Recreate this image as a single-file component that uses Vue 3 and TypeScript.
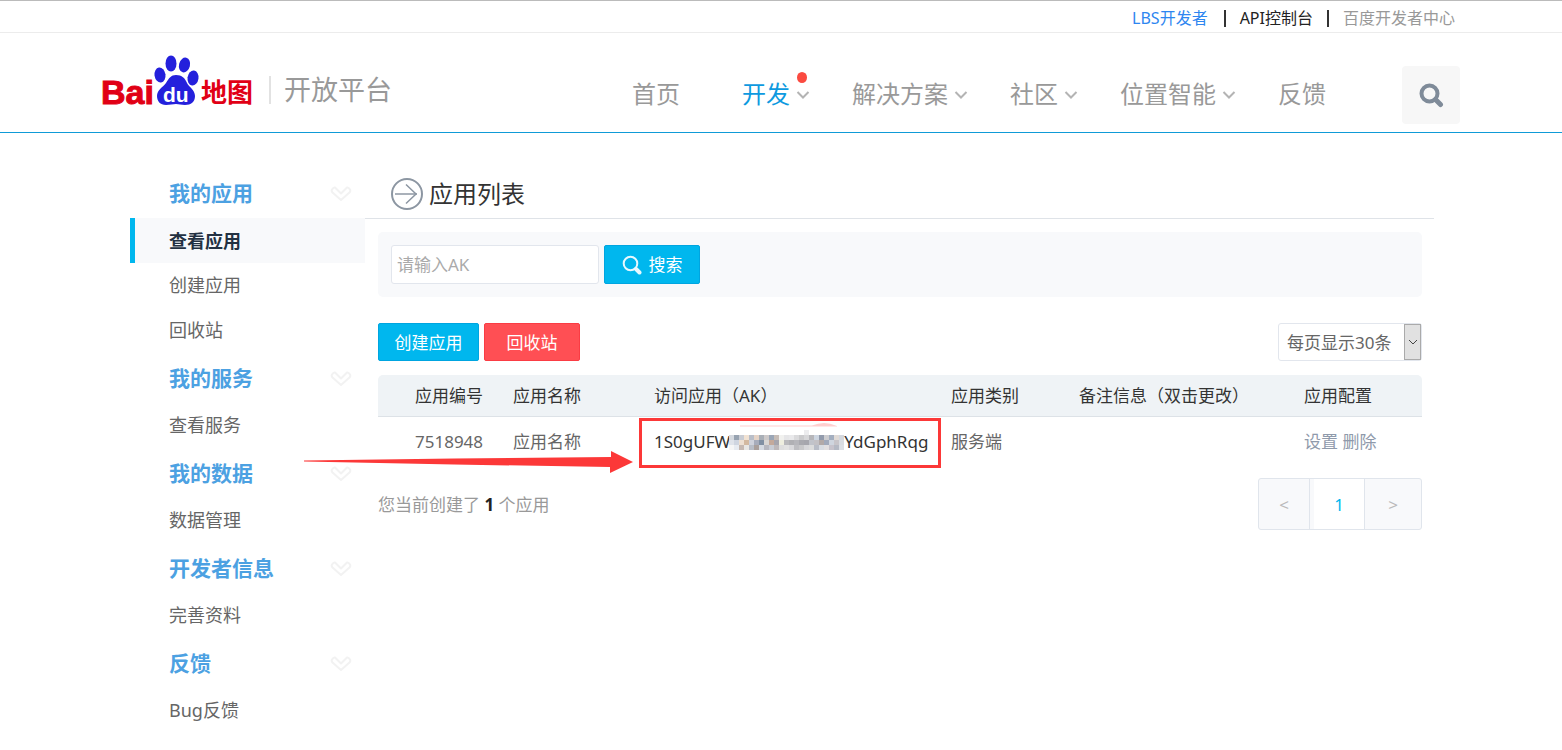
<script setup lang="ts">
import { ref } from 'vue'

interface NavItem { label: string; menu: boolean; active?: boolean; badge?: boolean }
interface Group { title: string; items: string[] }

const nav: NavItem[] = [
  { label: '首页', menu: false },
  { label: '开发', menu: true, active: true, badge: true },
  { label: '解决方案', menu: true },
  { label: '社区', menu: true },
  { label: '位置智能', menu: true },
  { label: '反馈', menu: false },
]

const groups: Group[] = [
  { title: '我的应用', items: ['查看应用', '创建应用', '回收站'] },
  { title: '我的服务', items: ['查看服务'] },
  { title: '我的数据', items: ['数据管理'] },
  { title: '开发者信息', items: ['完善资料'] },
  { title: '反馈', items: ['Bug反馈'] },
]

const current = '查看应用'
const keyword = ref('')
const pageSize = ref('30')

const mosaic: string[][] = [
  ['#d5d9df', '#98a3b1', '#c9ccd3', '#f1e2d3', '#b9bec8', '#e5d3c6', '#a9afb7', '#cdc9c9', '#9ba6b6', '#c6bcb6', '#f1f1ef', '#e6e6e8', '#e9e9eb', '#dadadc', '#cacacc', '#d6d6d8', '#b6b6ba', '#cdd5e0', '#929bac', '#cccccf', '#a3aebf', '#e0dad6', '#d3d7de'],
  ['#dfe3ea', '#cfd5e0', '#eee0d2', '#d3b9a0', '#cfd2dc', '#a7acbb', '#8190a3', '#d9d6d4', '#c3a99b', '#a6a5ad', '#eeeedf', '#b9b9bc', '#b0b0b4', '#b6b6bb', '#a9a9af', '#a6a6ad', '#c1c3ca', '#c3c1c5', '#b2a9a8', '#a1a9bb', '#cfd5df', '#c8c5ca', '#d9dce2'],
  ['#f6f6f6', '#e7ebf1', '#c6b9b2', '#e9e7e4', '#b8bdc7', '#a99f9c', '#d5dae2', '#b7b8c0', '#c8ccd4', '#bdb8ba', '#dedede', '#e2e2e2', '#d9d9dc', '#bebec2', '#c8c8ca', '#d7d7da', '#dcdcdc', '#b9bdc7', '#d8dce3', '#e2dfe1', '#c7c3cc', '#b5b9c4', '#dcdfe5'],
]
</script>

<template>
  <div class="page">
    <div class="topbar">
      <div class="wrap topbar-in">
        <a href="#" class="lbs">LBS开发者</a>
        <span class="bar"></span>
        <a href="#" class="api">API控制台</a>
        <span class="bar"></span>
        <a href="#" class="center">百度开发者中心</a>
      </div>
    </div>

    <header class="header">
      <div class="wrap header-in">
        <a href="#" class="brand">
          <svg class="logo" width="153" height="52" viewBox="0 0 153 52" role="img" aria-label="百度地图">
            <text x="0" y="49" font-size="34" class="lt" fill="#e10015" stroke="#e10015" stroke-width="1">Bai</text>
            <g fill="#2420dc">
              <ellipse cx="59" cy="20" rx="5.5" ry="7.5" transform="rotate(-8 59 20)" />
              <ellipse cx="70" cy="8.5" rx="5.5" ry="8" />
              <ellipse cx="83.5" cy="10" rx="5.5" ry="7.5" transform="rotate(14 83.5 10)" />
              <ellipse cx="92" cy="23" rx="5.5" ry="7.5" transform="rotate(8 92 23)" />
              <path d="M75 20c6 0 9 3 11 8 2 4 8 7 8 13 0 6-4 9-10 9-4 0-6-1-9-1s-6 1-10 1c-6 0-9-4-9-9 0-6 6-9 9-13 3-5 5-8 10-8z" />
            </g>
            <text x="62" y="47" font-size="21" class="lt" fill="#fff">du</text>
            <text x="100" y="47" font-size="26" class="cn" fill="#e10015">地图</text>
          </svg>
          <span class="sep"></span>
          <span class="platform">开放平台</span>
        </a>
        <nav class="nav">
          <a v-for="n in nav" :key="n.label" href="#" class="nav-item" :class="{ on: n.active }">
            <span>{{ n.label }}</span>
            <span class="slot">
              <svg v-if="n.menu" width="14" height="10" viewBox="0 0 14 10"><path d="M1.5 2l5.5 5.5L12.5 2" fill="none" stroke="#b4b4b4" stroke-width="2" /></svg>
              <i v-if="n.badge" class="dot"></i>
            </span>
          </a>
        </nav>
        <button class="find" type="button" aria-label="搜索站点">
          <svg width="26" height="26" viewBox="0 0 26 26" fill="none" stroke="#7f8b99"><circle cx="11.5" cy="11.5" r="8" stroke-width="4" /><path d="M17.5 17.5l5 5" stroke-width="5" stroke-linecap="round" /></svg>
        </button>
      </div>
    </header>

    <div class="body">
      <aside class="side">
        <section v-for="g in groups" :key="g.title">
          <h2 class="group">
            {{ g.title }}
            <svg width="22" height="18" viewBox="0 0 22 18"><path d="M5 3.5Q3.5 3 2 5.5Q1.200 7 2.500 8.500L11 16L19.500 8.500Q20.800 7 20 5.500Q18.500 3 17 3.500L11 9.500Z" fill="#fff" stroke="#f2f2f2" stroke-width="2" stroke-linejoin="round" /></svg>
          </h2>
          <a v-for="i in g.items" :key="i" href="#" class="item" :class="{ cur: i === current }">{{ i }}</a>
        </section>
      </aside>

      <main class="main">
        <h1 class="title">
          <svg width="34" height="34" viewBox="0 0 34 34" fill="none"><circle cx="17" cy="17" r="15" stroke="#8c96a2" stroke-width="2" /><path d="M5 17h22" stroke="#aab1ba" stroke-width="2" /><path d="M16 7.500L26 17L16 26.500" stroke="#8c96a2" stroke-width="1.500" /></svg>
          应用列表
        </h1>

        <div class="content">
          <form class="search" @submit.prevent>
            <input v-model="keyword" type="text" placeholder="请输入AK" aria-label="请输入AK" />
            <button class="btn blue go" type="submit">
              <svg width="20" height="20" viewBox="0 0 20 20" fill="none" stroke="#e8f8fe"><circle cx="8.500" cy="8.500" r="6.800" stroke-width="2" /><path d="M14 14l3.500 3.500" stroke-width="4" stroke-linecap="round" /></svg>
              搜索
            </button>
          </form>

          <div class="tools">
            <button class="btn blue create" type="button">创建应用</button>
            <button class="btn red" type="button">回收站</button>
            <div class="select">
              <select v-model="pageSize" aria-label="每页显示条数">
                <option value="30">每页显示30条</option>
                <option value="50">每页显示50条</option>
              </select>
              <span class="drop"><svg width="10" height="6" viewBox="0 0 10 6"><path d="M1 1l4 4 4-4" fill="none" stroke="#444" /></svg></span>
            </div>
          </div>

          <table class="table">
            <thead>
              <tr>
                <th class="c1">应用编号</th>
                <th class="c2">应用名称</th>
                <th class="c3">访问应用（AK）</th>
                <th class="c4">应用类别</th>
                <th class="c5">备注信息（双击更改）</th>
                <th>应用配置</th>
              </tr>
            </thead>
            <tbody>
              <tr>
                <td class="c1">7518948</td>
                <td>应用名称</td>
                <td class="ak">
                  <div class="key">
                    <span>1S0gUFW</span>
                    <svg width="115" height="20" viewBox="0 0 115 20" shape-rendering="crispEdges">
                      <rect x="75" y="0" width="5" height="5" fill="#ececee" />
                      <template v-for="(row, r) in mosaic" :key="r">
                        <rect v-for="(c, k) in row" :key="k" :x="k * 5" :y="r * 5 + 5" width="5" height="5" :fill="c" />
                      </template>
                    </svg>
                    <span>YdGphRqg</span>
                  </div>
                  <div class="mark">
                    <svg width="98" height="4" viewBox="0 0 98 4"><path d="M0 2.500h72q6-2.500 12-2.500t13 3v.5H0z" fill="#ffcfcf" /></svg>
                  </div>
                  <svg class="arrow" width="330" height="24" viewBox="0 0 330 24"><path d="M0 9.500L150 7.500L307 6V0L329 11L306 22V16L150 13.500L0 10.500Z" fill="#fc3838" /></svg>
                </td>
                <td>服务端</td>
                <td></td>
                <td class="ops"><a href="#">设置</a> <a href="#">删除</a></td>
              </tr>
            </tbody>
          </table>

          <div class="foot">
            <p>您当前创建了 <b>1</b> 个应用</p>
            <div class="pager">
              <button type="button" class="prev" aria-label="上一页">&lt;</button>
              <button type="button" class="num">1</button>
              <button type="button" class="next" aria-label="下一页">&gt;</button>
            </div>
          </div>
        </div>
      </main>
    </div>
  </div>
</template>

<style>
body { background: #fff; }
</style>

<style scoped>
* { box-sizing: border-box; }
.page { font-family: "Noto Sans", "Noto Sans CJK SC", sans-serif; font-size: 17px; color: #666; border-top: 1px solid #bbb; }
a { text-decoration: none; color: inherit; }
button, input, select { font: inherit; margin: 0; }
svg { display: block; flex: none; }
.wrap { max-width: 1360px; margin: 0 auto; display: flex; align-items: center; }
.topbar { border-bottom: 1px solid #ececec; }
.topbar-in { height: 31px; padding-right: 6px; padding-top: 3px; justify-content: flex-end; gap: 14px; font-size: 16px; line-height: 24px; }
.lbs { color: #2e86f0; margin-right: 2px; }
.api { color: #222; }
.center { color: #999; }
.bar { width: 2px; height: 17px; background: #333; }

.header { border-bottom: 1px solid #0f9bd7; }
.header-in { height: 99px; }
.brand { display: flex; align-items: center; padding-top: 15px; }
.logo { overflow: visible; margin-top: -18px; }
.lt { font-family: "Liberation Sans", sans-serif; font-weight: 700; }
.cn { font-family: "Noto Sans CJK SC", sans-serif; font-weight: 700; }
.sep { width: 2px; height: 28px; background: #e2e2e2; margin: 0 13px 0 15px; }
.platform { font-size: 27px; line-height: 36px; color: #999; }
.nav { display: flex; gap: 42px; margin-left: auto; margin-top: 22px; font-size: 24px; line-height: 36px; color: #999; }
.nav-item { display: flex; align-items: center; }
.on { color: #0d9ae0; }
.slot { position: relative; width: 14px; height: 10px; margin: 3px 0 0 6px; }
.dot { position: absolute; left: 1px; top: -18px; width: 10px; height: 11px; border-radius: 50%; background: #fb4a40; }
.find { width: 58px; height: 58px; margin: 24px 1px 0 56px; padding: 0; border: 0; border-radius: 4px; background: #f7f7f7; display: flex; align-items: center; justify-content: center; }

.body { max-width: 1306px; margin: 0 auto; padding-top: 35px; display: flex; align-items: flex-start; }
.side { flex: none; width: 237px; padding-left: 2px; }
.group { display: flex; align-items: center; justify-content: space-between; height: 50px; margin: 0; padding: 0 13px 0 39px; font-size: 21px; font-weight: 700; line-height: 30px; color: #4ca1e2; }
.item { display: block; height: 45px; padding-left: 39px; font-size: 18px; line-height: 45px; }
.cur { border-left: 5px solid #00b7ee; padding-left: 34px; padding-top: 1px; background: #f8f9fb; color: #233142; font-weight: 700; }

.main { flex: 1; min-width: 0; }
.title { display: flex; align-items: center; gap: 5px; height: 51px; margin: 0; padding: 2px 0 0 25px; border-bottom: 1px solid #dfe3e8; font-size: 24px; font-weight: 400; line-height: 36px; color: #333; }
.content { padding: 13px 12px 0 13px; }
.search { display: flex; gap: 5px; padding: 13px; border-radius: 5px; background: #f8f9fb; }
.search input { width: 208px; height: 39px; padding: 0 5px; border: 1px solid #e2e6ed; border-radius: 3px; background: #fff; color: #333; outline: 0; }
.search input::placeholder { color: #aaa; opacity: 1; }
.btn { height: 38px; width: 96px; padding: 1px 0 0; border: 1px solid #00a5e0; border-radius: 2px; color: #fff; line-height: 24px; }
.blue { background: #00b7ee; }
.red { background: #ff4f54; border-color: #fa3c44; }
.create { width: 101px; }
.go { height: 39px; display: flex; align-items: center; justify-content: center; gap: 7px; }
.tools { display: flex; gap: 5px; margin: 26px 0 14px; }
.select { position: relative; margin-left: auto; width: 144px; height: 38px; }
.select select { width: 100%; height: 100%; padding: 0 22px 0 8px; border: 1px solid #e2e6ed; border-radius: 3px; background: #fff; color: #666; appearance: none; }
.drop { position: absolute; top: 1px; right: 1px; bottom: 1px; width: 17px; border: 1px solid #aaa; background: #e1e1e1; display: flex; align-items: center; justify-content: center; pointer-events: none; }

.table { width: 100%; table-layout: fixed; border-collapse: separate; border-spacing: 0; }
th { height: 42px; padding: 0; text-align: left; font-weight: 400; line-height: 24px; color: #333; background: #eff3f6; border-bottom: 1px solid #dde2e7; white-space: nowrap; }
th:first-child { border-top-left-radius: 5px; }
th:last-child { border-top-right-radius: 5px; }
td { height: 50px; padding: 0; line-height: 24px; }
.c1 { width: 135px; padding-left: 37px; }
.c2 { width: 141px; }
.c3 { width: 297px; }
.c4 { width: 128px; }
.c5 { width: 225px; }
.ops { color: #8f9aab; }
.ak { position: relative; color: #333; }
.key { display: flex; align-items: center; }
.key svg { margin-top: -4px; margin-left: -1px; }
.mark { position: absolute; left: -15px; top: 1px; width: 302px; height: 50px; border: 3px solid #fc3838; padding: 2px 0 0 98px; }
.arrow { position: absolute; left: -350px; top: 34px; pointer-events: none; }

.foot { display: flex; justify-content: space-between; margin-top: 11px; }
.foot p { margin: 0; padding-top: 1px; line-height: 52px; color: #999; }
.foot b { color: #222; }
.pager { display: flex; width: 164px; height: 52px; border: 1px solid #e0e5ec; border-radius: 3px; background: #f8f9fb; }
.pager button { padding: 0; border: 0; background: none; color: #bbb; }
.pager .prev { width: 51px; border-right: 1px solid #e0e5ec; }
.pager .num { width: 51px; margin-left: 4px; border-right: 1px solid #e0e5ec; background: #fff; color: #00b7ee; }
.pager .next { flex: 1; }
</style>
